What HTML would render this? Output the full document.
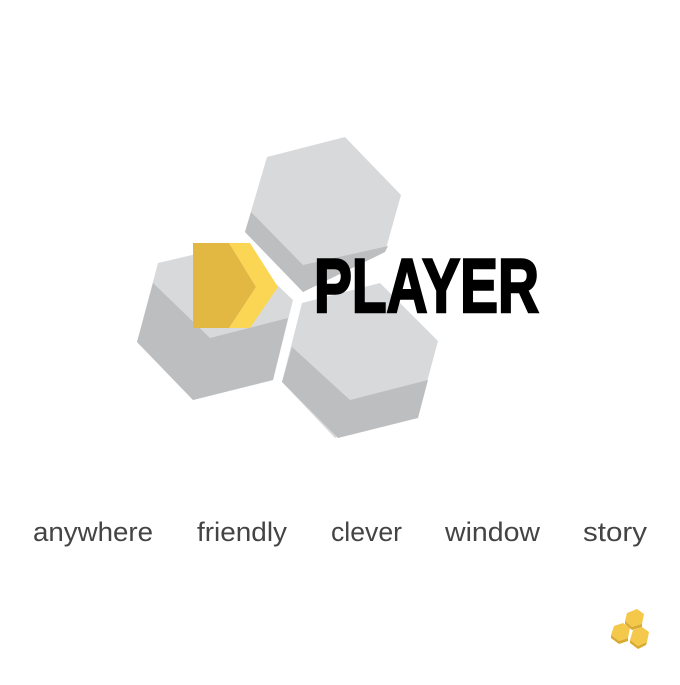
<!DOCTYPE html>
<html><head><style>
html,body{margin:0;padding:0;background:#fff;width:680px;height:685px;overflow:hidden}
</style></head><body>
<svg width="680" height="685" viewBox="0 0 680 685" xmlns="http://www.w3.org/2000/svg">
<!-- top hex -->
<polygon points="267,157 345,137 401,195 385,252 303,292 245,232" fill="#d8d9db"/>
<polygon points="245,232 251,212 303,265 388,246 385,252 303,292" fill="#bdbec0"/>
<!-- bottom-left hex -->
<polygon points="158,263 235,245 293,300 273,380 193,400 137,342" fill="#d8d9db"/>
<polygon points="137,342 153,283 210,338 288,318 273,380 193,400" fill="#bdbec0"/>
<!-- bottom-right hex -->
<polygon points="302,303 380,283 438,341 427,382 335,438 282,382" fill="#d8d9db"/>
<polygon points="282,382 292,347 350,400 428,380 418,418 338,438" fill="#bdbec0"/>
<!-- yellow -->
<polygon points="193,243 229,243 256,287 229,328 193,328" fill="#e2b742"/>
<polygon points="229,243 250,243 278,287 250,328 229,328 256,287" fill="#fbd655"/>
<text x="314" y="312" font-family="Liberation Sans, sans-serif" font-weight="bold" font-size="76" textLength="225" lengthAdjust="spacingAndGlyphs" fill="#000" stroke="#000" stroke-width="2.5" stroke-linejoin="miter">PLAYER</text>
<g font-family="Liberation Sans, sans-serif" font-size="27" fill="#444">
<text x="33" y="541" textLength="120" lengthAdjust="spacingAndGlyphs">anywhere</text>
<text x="197" y="541" textLength="90" lengthAdjust="spacingAndGlyphs">friendly</text>
<text x="331" y="541" textLength="71" lengthAdjust="spacingAndGlyphs">clever</text>
<text x="445" y="541" textLength="95" lengthAdjust="spacingAndGlyphs">window</text>
<text x="583" y="541" textLength="64" lengthAdjust="spacingAndGlyphs">story</text>
</g>
<!-- small icon -->
<g>
<polygon points="627,613 637,609 644,614 642,624 632,627 625,621" fill="#f4c84a"/>
<polygon points="614,626 623,623 630,628 628,638 619,641 611,635" fill="#f4c84a"/>
<polygon points="633,630 642,627 649,632 647,642 638,646 630,640" fill="#f4c84a"/>
<polygon points="625,621 632,627 642,624 642,627 632,630 625,624" fill="#d9aa2f"/>
<polygon points="611,635 619,641 628,638 628,641 619,644 611,638" fill="#d9aa2f"/>
<polygon points="630,640 638,646 647,642 646,645 638,649 630,643" fill="#d9aa2f"/>
</g>
</svg>
</body></html>
